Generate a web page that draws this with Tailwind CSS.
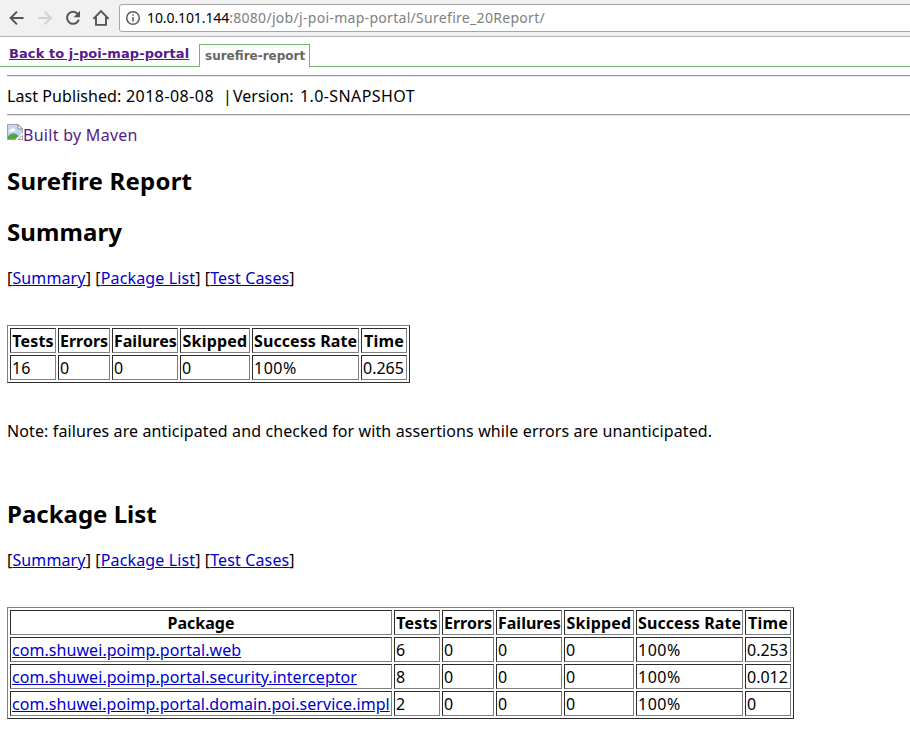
<!DOCTYPE html>
<html lang="en">
<head>
<meta charset="utf-8">
<title>Surefire Report</title>
<script src="https://cdn.jsdelivr.net/npm/@tailwindcss/browser@4"></script>
</head>
<body class="bg-white text-black font-['Noto_Sans','Open_Sans',sans-serif] text-[16px] leading-[21px] overflow-hidden whitespace-nowrap">

<!-- Browser toolbar -->
<header class="h-[37px] bg-[#f1f1f1] border-b border-[#b4b4b4] flex items-start overflow-hidden">
  <div class="flex pt-[9px] pl-[8px] gap-[10px] w-[119px] shrink-0">
    <svg class="w-[18px] h-[18px] shrink-0" viewBox="0 0 18 18" fill="none" stroke="#555" stroke-width="2"><path d="M15.5 9H3M9 2.6L2.6 9L9 15.4"/></svg>
    <svg class="w-[18px] h-[18px] shrink-0" viewBox="0 0 18 18" fill="none" stroke="#d2d2d2" stroke-width="2"><path d="M2 9H14.5M8.5 2.6L14.9 9L8.5 15.4"/></svg>
    <svg class="w-[18px] h-[18px] shrink-0" viewBox="0 0 18 18" fill="none" stroke="#555" stroke-width="2"><path d="M13.7 4.9A6 6 0 1 0 14.8 10.6"/><path d="M16 1.8V8.3H9.5Z" fill="#555" stroke="none"/></svg>
    <svg class="w-[18px] h-[18px] shrink-0" viewBox="0 0 18 18" fill="none" stroke="#555" stroke-width="1.9"><path d="M1.4 9.8L9 2.2L16.6 9.8M4 8V15.9H14V8"/></svg>
  </div>
  <div class="mt-[4px] h-[28px] w-[820px] shrink-0 bg-white border border-[#a6a6a6] rounded-[3px] flex items-center">
    <svg class="ml-[5px] w-[16px] h-[16px] shrink-0" viewBox="0 0 16 16" fill="none" stroke="#5a5a5a" stroke-width="1.5"><circle cx="8" cy="8" r="6.3"/><path d="M8 7V11.6M8 4.2V5.8"/></svg>
    <div class="ml-[6px] text-[14px] leading-[20px]"><span class="tracking-[-0.1px]">10.0.101.144</span><span class="text-[#808080] tracking-[0.3px]">:8080/job/j-poi-map-portal/Surefire_20Report/</span></div>
  </div>
</header>

<!-- Report tabs -->
<nav class="h-[30px] flex font-bold">
  <div class="w-[199px] shrink-0 border-b border-[#72b572] pl-[9px] pt-[7px] font-['DejaVu_Sans',sans-serif] text-[13px] leading-[20px] tracking-[0.08px]"><a class="text-[#551a8b] underline">Back to j-poi-map-portal</a></div>
  <div class="w-[111px] h-[23px] mt-[7px] shrink-0 border-x border-t border-[#72b572] pl-[5px] pt-[1px] font-['DejaVu_Sans',sans-serif] text-[12px] leading-[20px] text-[#666]">surefire-report</div>
  <div class="grow border-b border-[#72b572]"></div>
</nav>

<main class="pl-[7px] pt-[8px]">
  <div class="h-[2px] border-t border-[#999] border-b border-b-[#e8e8e8]"></div>
  <div class="flex mt-[9px]"><span class="w-[119px] tracking-[0.07px]">Last Published:</span><span class="w-[97px] tracking-[0.45px]">2018-08-08</span><span class="w-[10px]">|</span><span class="w-[67px]">Version:</span><span class="tracking-[0.4px]">1.0-SNAPSHOT</span></div>
  <div class="h-[2px] border-t border-[#999] border-b border-b-[#e8e8e8] mt-[7px]"></div>
  <div class="flex mt-[8px] text-[#551a8b]">
    <svg class="w-[16px] h-[16px] shrink-0" viewBox="0 0 16 16"><path d="M.5 .5H11L15.5 5V10L9 15.5H.5Z" fill="#c3d6f5"/><path d="M2 8Q2 5.5 4.2 5.5Q5 3.5 7 4.5Q8.5 5 8 7Z" fill="#fff"/><path d="M1 15V12Q5 8 9 10L12 12L8.500 15Z" fill="#53a63f"/><path d="M9 15.500H.5V.5H11L15.500 5V9" fill="none" stroke="#a0a0a0"/><path d="M11 .5V5H15.500Z" fill="#fff" stroke="#888"/><path d="M8 16L16 8.500V16Z" fill="#fff"/><path d="M11 15.500H15.500V11.500Z" fill="#fff" stroke="#a0a0a0"/></svg>
    <span class="pt-px tracking-[0.28px]">Built by Maven</span>
  </div>
  <h2 class="mt-[19px] text-[24px] leading-[32px] font-bold tracking-[0.21px]">Surefire Report</h2>
  <h2 class="mt-[19px] text-[24px] leading-[32px] font-bold tracking-[0.08px]">Summary</h2>
  <p class="mt-[20px] tracking-[0.13px]">[<a class="text-[#0000cc] underline">Summary</a>] [<a class="text-[#0000cc] underline">Package List</a>] [<a class="text-[#0000cc] underline">Test Cases</a>]</p>

  <table class="mt-[36px] w-[403px] table-fixed border-separate border-spacing-[2px] border border-t-[#808080] border-l-[#808080] border-r-[#2c2c2c] border-b-[#2c2c2c] [&_th]:border [&_td]:border [&_th]:px-px [&_td]:px-px [&_th]:pt-[2px] [&_td]:pt-[2px] [&_th]:pb-0 [&_td]:pb-0 [&_th]:h-[25px] [&_td]:h-[25px] [&_th]:border-t-[#2c2c2c] [&_th]:border-l-[#2c2c2c] [&_th]:border-r-[#808080] [&_th]:border-b-[#808080] [&_td]:border-t-[#2c2c2c] [&_td]:border-l-[#2c2c2c] [&_td]:border-r-[#808080] [&_td]:border-b-[#808080]">
    <tr><th class="w-[46px] tracking-[0.2px]">Tests</th><th class="w-[52px]">Errors</th><th class="w-[66px]">Failures</th><th class="w-[70px] tracking-[0.2px]">Skipped</th><th class="w-[107px] tracking-[0.08px]">Success Rate</th><th class="w-[46px] tracking-[0.2px]">Time</th></tr>
    <tr><td>16</td><td>0</td><td>0</td><td>0</td><td class="tracking-[0.5px]">100%</td><td>0.265</td></tr>
  </table>

  <p class="mt-[38px] tracking-[0.115px]">Note: failures are anticipated and checked for with assertions while errors are unanticipated.</p>

  <h2 class="mt-[56px] text-[24px] leading-[32px] font-bold">Package List</h2>
  <p class="mt-[20px] tracking-[0.13px]">[<a class="text-[#0000cc] underline">Summary</a>] [<a class="text-[#0000cc] underline">Package List</a>] [<a class="text-[#0000cc] underline">Test Cases</a>]</p>

  <table class="mt-[36px] w-[787px] table-fixed border-separate border-spacing-[2px] border border-t-[#808080] border-l-[#808080] border-r-[#2c2c2c] border-b-[#2c2c2c] [&_th]:border [&_td]:border [&_th]:px-px [&_td]:px-px [&_th]:pt-[2px] [&_td]:pt-[2px] [&_th]:pb-0 [&_td]:pb-0 [&_th]:h-[25px] [&_td]:h-[25px] [&_th]:border-t-[#2c2c2c] [&_th]:border-l-[#2c2c2c] [&_th]:border-r-[#808080] [&_th]:border-b-[#808080] [&_td]:border-t-[#2c2c2c] [&_td]:border-l-[#2c2c2c] [&_td]:border-r-[#808080] [&_td]:border-b-[#808080]">
    <tr><th class="w-[382px]">Package</th><th class="w-[46px] tracking-[0.2px]">Tests</th><th class="w-[52px]">Errors</th><th class="w-[66px]">Failures</th><th class="w-[70px] tracking-[0.2px]">Skipped</th><th class="w-[107px] tracking-[0.08px]">Success Rate</th><th class="w-[46px] tracking-[0.2px]">Time</th></tr>
    <tr><td><a class="text-[#0000cc] underline tracking-[0.06px]">com.shuwei.poimp.portal.web</a></td><td>6</td><td>0</td><td>0</td><td>0</td><td class="tracking-[0.5px]">100%</td><td>0.253</td></tr>
    <tr><td><a class="text-[#0000cc] underline tracking-[0.06px]">com.shuwei.poimp.portal.security.interceptor</a></td><td>8</td><td>0</td><td>0</td><td>0</td><td class="tracking-[0.5px]">100%</td><td>0.012</td></tr>
    <tr><td><a class="text-[#0000cc] underline tracking-[0.05px]">com.shuwei.poimp.portal.domain.poi.service.impl</a></td><td>2</td><td>0</td><td>0</td><td>0</td><td class="tracking-[0.5px]">100%</td><td>0</td></tr>
  </table>
</main>
</body>
</html>
